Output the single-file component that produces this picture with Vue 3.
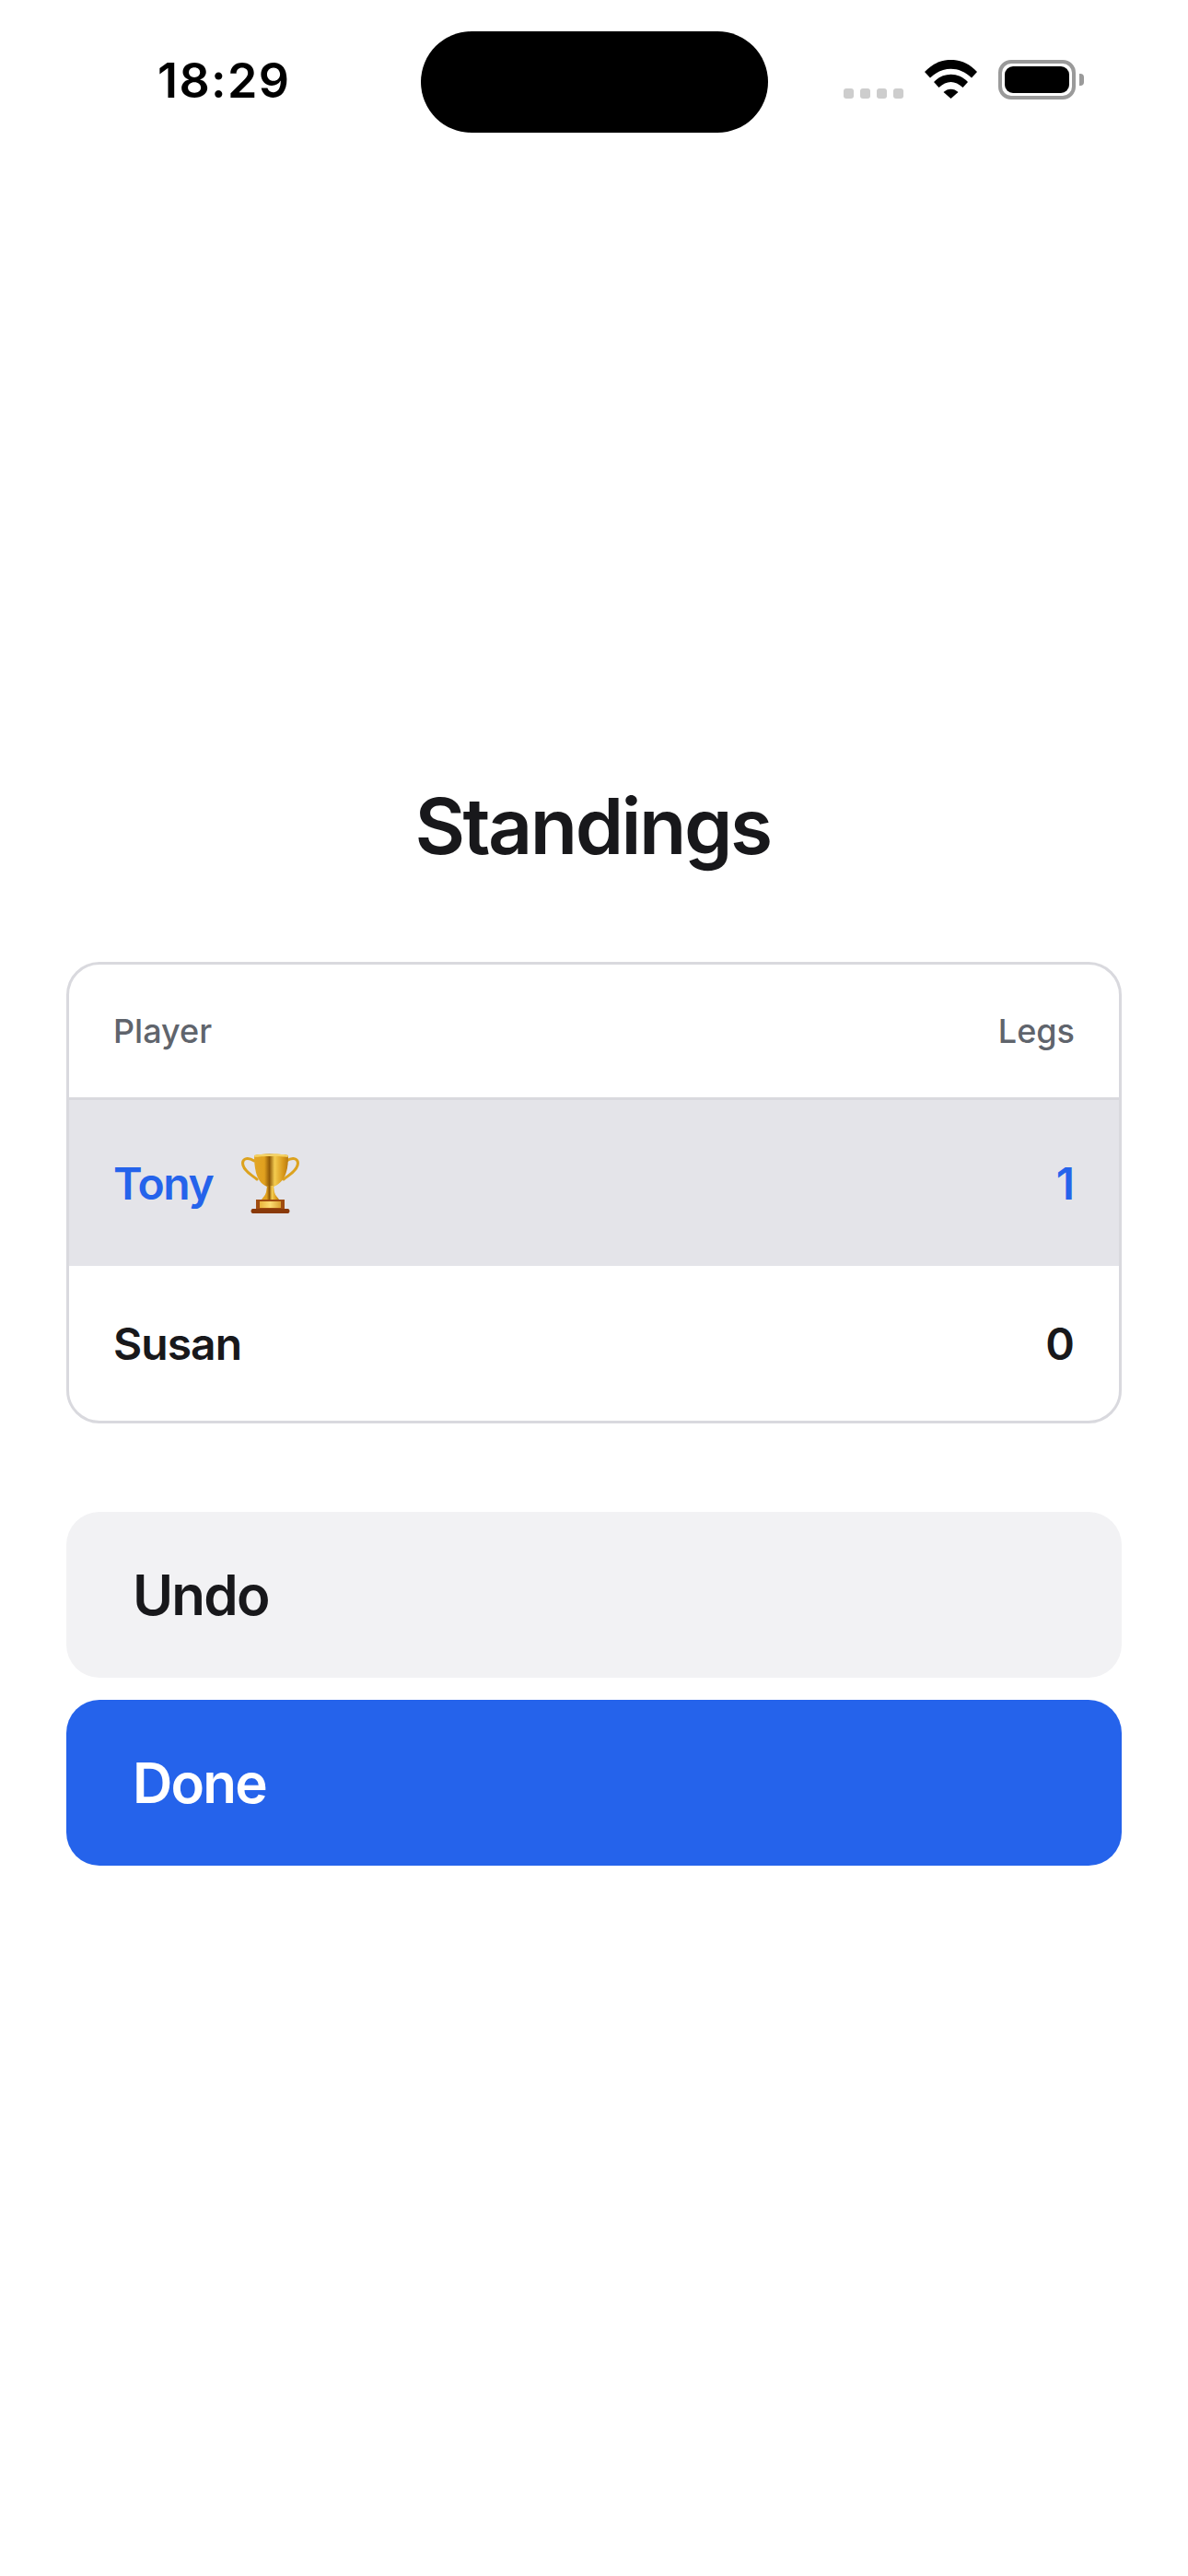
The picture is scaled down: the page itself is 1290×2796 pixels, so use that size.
<script setup>
const players = [
  { name: 'Tony', legs: 1, winner: true },
  { name: 'Susan', legs: 0, winner: false }
]
</script>

<template>
  <div class="page">
    <header class="status">
      <span class="time">18:29</span>
      <div class="island"></div>
      <div class="status-icons">
        <div class="signal">
          <i></i><i></i><i></i><i></i>
        </div>
        <svg class="wifi" width="57" height="42" viewBox="0 0 57 42">
          <path d="M0 13C16-4.500 41-4.500 57 13L51 19.500C37.500 6.500 19.500 6.500 6 19.500Z" />
          <path d="M10 24C20 13 37 13 47 24L41.500 30C33 22 24 22 15.500 30Z" />
          <path d="M20.500 35C25 30.500 32 30.500 36.500 35L28.500 42Z" />
        </svg>
        <div class="battery">
          <div class="battery-fill"></div>
        </div>
      </div>
    </header>

    <main class="content">
      <h1>Standings</h1>

      <section class="table">
        <div class="row head">
          <span>Player</span>
          <span>Legs</span>
        </div>
        <div
          v-for="p in players"
          :key="p.name"
          class="row player"
          :class="{ winner: p.winner }"
        >
          <span class="name">
            {{ p.name }}
            <svg v-if="p.winner" class="trophy" width="65" height="65" viewBox="0 0 65 65">
              <defs>
                <linearGradient id="cup" x1="0" x2="1" y1="0" y2="0">
                  <stop offset="0" stop-color="#e2a624" />
                  <stop offset="0.3" stop-color="#e0a01e" />
                  <stop offset="0.45" stop-color="#8f5a08" />
                  <stop offset="0.6" stop-color="#f4cc50" />
                  <stop offset="0.85" stop-color="#d8981a" />
                  <stop offset="1" stop-color="#b87a10" />
                </linearGradient>
                <linearGradient id="plate" x1="0" x2="1" y1="0" y2="0">
                  <stop offset="0" stop-color="#e8b53c" />
                  <stop offset="0.5" stop-color="#fbdc72" />
                  <stop offset="1" stop-color="#d9a030" />
                </linearGradient>
              </defs>
              <path d="M15 8C7 3 1 6 3 13C5 20 12 23 18 28" fill="none" stroke="#dca21e" stroke-width="3" stroke-linecap="round" />
              <path d="M50 8C58 3 64 6 62 13C60 20 53 23 47 28" fill="none" stroke="#dca21e" stroke-width="3" stroke-linecap="round" />
              <path d="M15 2C22 0 45 0 52 2C52 18 49 31 36 36H29C18 32 15 18 15 2Z" fill="url(#cup)" />
              <path d="M15 2C22 0 45 0 52 2L51.500 4C45 2.500 22 2.500 15.500 4Z" fill="#f4d264" />
              <path d="M29 35H36L37 42C38 46 41 48 42 50H23C24 48 27 46 28 42Z" fill="url(#cup)" />
              <path d="M17 50H48V61H17Z" fill="#a04c10" />
              <path d="M13 60H52C54 61 54 64 52 65H13C11 64 11 61 13 60Z" fill="#8a3a0a" />
              <rect x="21" y="52" width="23" height="7" fill="url(#plate)" />
            </svg>
          </span>
          <span class="legs">{{ p.legs }}</span>
        </div>
      </section>

      <div class="actions">
        <button class="btn undo">Undo</button>
        <button class="btn done">Done</button>
      </div>
    </main>
  </div>
</template>

<style>
html, body {
  margin: 0;
  background: #fff;
}
</style>

<style scoped>
.page {
  position: relative;
  width: 1290px;
  height: 2796px;
  overflow: hidden;
  background: #fff;
  font-family: Inter, "Liberation Sans", sans-serif;
  color: #18181b;
}

.status {
  position: relative;
  height: 160px;
}

.time {
  position: absolute;
  left: 171px;
  top: 56px;
  font-size: 52px;
  line-height: 63px;
  font-weight: 600;
  letter-spacing: 1.4px;
  color: #000;
}

.island {
  position: absolute;
  left: 457px;
  top: 34px;
  width: 377px;
  height: 110px;
  border-radius: 55px;
  background: #000;
}

.status-icons {
  position: absolute;
  left: 916px;
  top: 65px;
  display: flex;
  align-items: flex-start;
}

.signal {
  display: flex;
  gap: 7px;
  margin-top: 31px;
  margin-right: 23px;
}

.signal i {
  width: 11px;
  height: 11px;
  border-radius: 3px;
  background: #cdcdcd;
}

.wifi {
  display: block;
  margin-right: 23px;
}

.wifi path {
  fill: #000;
}

.battery {
  position: relative;
  box-sizing: border-box;
  width: 84px;
  height: 43px;
  padding: 3px;
  border: 4px solid #9a9a9a;
  border-radius: 14px;
}

.battery::after {
  content: "";
  position: absolute;
  left: 84px;
  top: 11px;
  width: 5px;
  height: 13px;
  border-radius: 0 4px 4px 0;
  background: #9a9a9a;
}

.battery-fill {
  height: 100%;
  border-radius: 9px;
  background: #000;
}

.content {
  padding: 687px 72px 0;
}

h1 {
  margin: 0 0 97px;
  padding-right: 3px;
  text-align: center;
  font-size: 84px;
  line-height: 100px;
  font-weight: 600;
  letter-spacing: -0.03em;
}

.table {
  box-sizing: border-box;
  width: 1146px;
  border: 3px solid #d9d9de;
  border-radius: 36px;
  overflow: hidden;
}

.row {
  display: flex;
  align-items: center;
  justify-content: space-between;
  padding: 0 48px;
}

.head {
  height: 144px;
  border-bottom: 3px solid #d9d9de;
  font-size: 36px;
  color: #5f646c;
  font-weight: 500;
}

.player {
  height: 168px;
  font-size: 48px;
  font-weight: 600;
  letter-spacing: -0.02em;
}

.winner {
  height: 180px;
  background: #e4e4e9;
  color: #2563eb;
}

.name {
  display: flex;
  align-items: center;
  gap: 30px;
}

.winner .name {
  letter-spacing: -0.03em;
}

.legs {
  letter-spacing: 0;
}

.trophy {
  display: block;
}

.actions {
  display: flex;
  flex-direction: column;
  gap: 24px;
  margin-top: 96px;
}

.btn {
  height: 180px;
  padding: 0 72px;
  border: none;
  border-radius: 36px;
  text-align: left;
  font-family: inherit;
  font-size: 60px;
  font-weight: 600;
  letter-spacing: -0.03em;
}

.undo {
  background: #f2f2f4;
  color: #18181b;
}

.done {
  background: #2563eb;
  color: #fff;
}
</style>
